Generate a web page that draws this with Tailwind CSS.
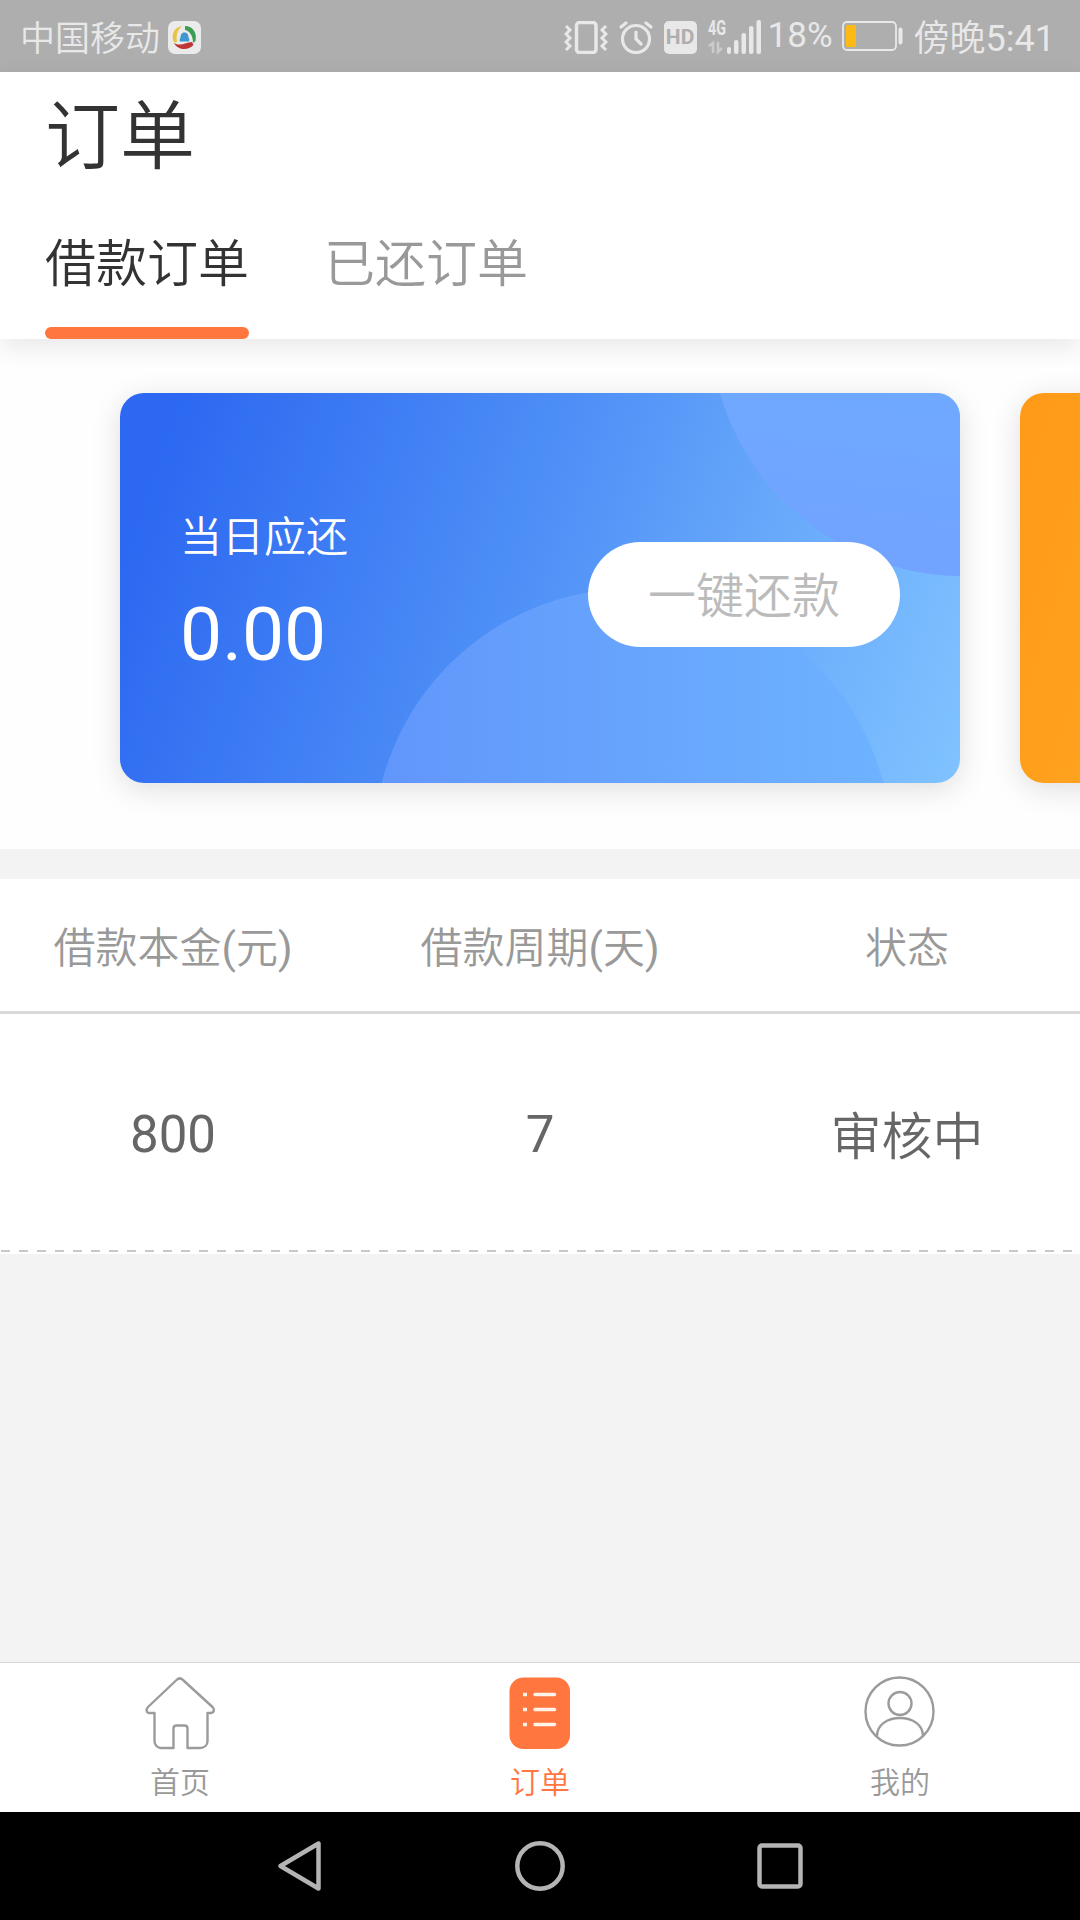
<!DOCTYPE html>
<html lang="zh-CN">
<head>
    <meta charset="UTF-8">
    <meta name="viewport" content="width=device-width, initial-scale=1.0">
    <title>订单</title>
    <script src="https://cdn.jsdelivr.net/npm/@tailwindcss/browser@4"></script>
</head>
<body class="bg-[#f3f3f3] font-[Roboto,'Noto_Sans_CJK_SC',sans-serif]">
<div class="w-[1080px] h-[1920px] flex flex-col overflow-hidden">

    <!-- status bar -->
    <div class="h-[72px] shrink-0 bg-[#aeaeae] flex items-center pt-[2px] pl-[20px] pr-[25px] text-[#e8e8e8] text-[35px] leading-none font-[350]">
        <span class="mt-[4px]">中国移动</span>
        <svg class="ml-[8px] w-[33px] h-[33px]" viewBox="0 0 33 33">
            <rect width="33" height="33" rx="7" fill="#ebebeb"/>
            <path d="M14 5C6 6 2.500 14 6 21.500L9 21C8 14 9.500 9 14 5Z" fill="#e6c545"/>
            <path d="M17 5C24 5 29.500 11 27.500 20L25 22C25 15 22 10 17 9Z" fill="#3d9d55"/>
            <path d="M6 22C10 29.500 20 30 25.500 24L24 21C18 21 13 26 6 22Z" fill="#bf3434"/>
            <path d="M16.500 11.500c-3 0-4 2.500-4 5-1 1.500-1 3-.5 4h9c.5-1 .5-2.500-.5-4 0-2.500-1-5-4-5Z" fill="#3f97d0"/>
        </svg>

        <div class="ml-auto flex items-center">
            <svg class="w-[44px] h-[33px]" viewBox="0 0 44 33" fill="none" stroke="#e8e8e8">
                <rect x="12.500" y="1.500" width="19.500" height="30" rx="3" stroke-width="3.500"/>
                <path d="M2 5l4 4-4 4 4 4-4 4 4 4-4 4M42 5l-4 4 4 4-4 4 4 4-4 4 4 4" stroke-width="3"/>
            </svg>
            <svg class="ml-[11px] w-[34px] h-[33px]" viewBox="0 0 34 33" fill="none" stroke="#e8e8e8" stroke-width="3.200" stroke-linecap="round">
                <circle cx="17" cy="18" r="13.500"/>
                <path d="M17 11v7l5 5M2 6l5-4M32 6l-5-4"/>
            </svg>
            <div class="ml-[11px] w-[33px] h-[33px] rounded-[5px] bg-[#e8e8e8] text-[#aeaeae] text-[21px] font-bold flex items-center justify-center">HD</div>
            <svg class="ml-[11px] w-[54px] h-[34px] overflow-visible" viewBox="0 0 54 34" fill="#e8e8e8">
                <text x="0" y="15" font-family="Roboto" font-size="20" font-weight="700" textLength="18" lengthAdjust="spacingAndGlyphs">4G</text>
                <path d="M1 26l4-3v10M10 22v10l4-4" fill="none" stroke="#cbcbcb" stroke-width="2.500"/>
                <rect x="19" y="27" width="4" height="7" rx="2"/>
                <rect x="26" y="20" width="4.500" height="14" rx="2"/>
                <rect x="33.500" y="13" width="4.500" height="21" rx="2"/>
                <rect x="41" y="6" width="4.500" height="28" rx="2"/>
                <rect x="48.500" y="0" width="4.500" height="34" rx="2"/>
            </svg>
            <span class="ml-[6px] -mt-[4px] text-[35px] w-[67px] font-normal">18%</span>
            <svg class="ml-[7px] w-[61px] h-[30px] -mt-[3px]" viewBox="0 0 61 30">
                <rect x="1" y="1" width="53" height="28" rx="4" fill="none" stroke="#e8e8e8" stroke-width="1.800"/>
                <rect x="4" y="4" width="10" height="22" rx="1.500" fill="#fdba14"/>
                <rect x="56.500" y="6.500" width="4" height="17" rx="2" fill="#e8e8e8"/>
            </svg>
            <span class="ml-[11px] mt-[3px] text-[36px]">傍晚<span class="font-normal">5:41</span></span>
        </div>
    </div>

    <!-- header + tabs -->
    <div class="relative h-[267px] shrink-0 bg-white px-[45px] flex flex-col text-[#333] shadow-[0_8px_24px_rgba(0,0,0,0.09)]">
        <h1 class="h-[124px] leading-[131px] text-[75px] font-[350]">订单</h1>
        <div class="flex gap-[75px] text-[51px] leading-[137px] font-[350]">
            <div class="h-[143px] flex flex-col">
                <span class="h-[131px]">借款订单</span>
                <i class="h-[12px] rounded-full bg-[#ff763f]"></i>
            </div>
            <span class="text-[#999]">已还订单</span>
        </div>
    </div>

    <!-- cards -->
    <div class="h-[510px] shrink-0 bg-[#fefefe] pt-[54px] pl-[120px] flex gap-[60px] overflow-hidden">
        <div class="relative w-[840px] h-[390px] shrink-0 rounded-[24px] shadow-[0_6px_30px_rgba(0,0,0,0.13)] bg-[linear-gradient(109deg,#2c68f1_6%,#5092f7_50%,#64a5fa_68%,#80c3ff_100%)] flex items-center justify-between pl-[60px] pr-[60px] text-white">
            <svg class="absolute inset-0 w-full h-full rounded-[24px]" viewBox="0 0 840 390">
                <defs>
                    <linearGradient id="c1" x1="0" y1="0" x2="1" y2="0">
                        <stop offset="0" stop-color="#6196fb"/>
                        <stop offset="1" stop-color="#6db3ff"/>
                    </linearGradient>
                    <linearGradient id="c2" x1="0.500" y1="1" x2="0.600" y2="0.200">
                        <stop offset="0" stop-color="#71a3ff"/>
                        <stop offset="1" stop-color="#6db0ff"/>
                    </linearGradient>
                </defs>
                <circle cx="512.500" cy="454.500" r="259" fill="url(#c1)"/>
                <circle cx="843" cy="-70" r="253" fill="url(#c2)"/>
            </svg>
            <div class="relative pt-[10px]">
                <p class="text-[42px] leading-[60px] font-[350]">当日应还</p>
                <p class="text-[75px] leading-[88px] mt-[22px]">0.00</p>
            </div>
            <button class="relative mt-[13px] pt-[5px] w-[312px] h-[105px] rounded-full bg-white text-[#bbb] text-[48px] leading-none font-[350]">一键还款</button>
        </div>
        <div class="w-[840px] h-[390px] shrink-0 rounded-[24px] shadow-[0_6px_30px_rgba(0,0,0,0.13)] bg-[linear-gradient(109deg,#ff9a17,#ffa622_30%,#ffb52f)]"></div>
    </div>

    <!-- order table -->
    <div class="mt-[30px] shrink-0 bg-white text-center">
        <div class="h-[135px] pt-[6px] border-b-3 border-[#d9d9d9] grid grid-cols-[346px_388px_346px] items-center text-[42px] text-[#999] font-[350]">
            <span>借款本金<span class="font-normal">(</span>元<span class="font-normal">)</span></span>
            <span>借款周期<span class="font-normal">(</span>天<span class="font-normal">)</span></span>
            <span>状态</span>
        </div>
        <div class="h-[236px] pt-[7px] grid grid-cols-[346px_388px_346px] items-center text-[51px] text-[#666]">
            <span>800</span>
            <span>7</span>
            <span class="pt-[5px] font-[350]">审核中</span>
        </div>
        <div class="h-[4px] bg-white">
            <div class="h-[2px] bg-[repeating-linear-gradient(90deg,transparent_0_1px,#c8c8c8_1px_10px,transparent_10px_18px)]"></div>
        </div>
    </div>

    <!-- tab bar -->
    <div class="mt-auto h-[150px] shrink-0 bg-white border-t border-[#d8d8d8] grid grid-cols-3 text-[30px] leading-[40px] text-[#999] font-[350]">
        <div class="flex flex-col items-center pt-[12px]">
            <svg class="w-[72px] h-[76px]" viewBox="0 0 72 76" fill="none" stroke="#9b9b9b" stroke-width="2.400" stroke-linejoin="round">
                <path d="M32.500 5 4 32C1.500 34.500 2.500 38 5.500 38H10.500V66c0 4 3 7 6.500 7H29.500V53.500c0-2 1-3 3-3h8c2 0 3 1 3 3V73H56c4.500 0 7.500-3 7.500-7V38H66.500c3.500 0 4.500-3.500 2-6L39 5c-2-2-4.500-2-6.500 0Z"/>
            </svg>
            <span class="mt-[12px]">首页</span>
        </div>
        <div class="flex flex-col items-center pt-[12px] text-[#ff763f]">
            <svg class="w-[72px] h-[76px]" viewBox="0 0 72 76">
                <rect x="5.500" y="2.500" width="60.500" height="71.500" rx="14" fill="#ff763f"/>
                <path d="M19 19.500h4M19 34.500h4M19 49.500h4" stroke="#fff3ea" stroke-width="3.500"/>
                <path d="M31 19.500h19.500M31 34.500h19.500M31 49.500h19.500" stroke="#fff3ea" stroke-width="3.500" stroke-linecap="round"/>
            </svg>
            <span class="mt-[12px]">订单</span>
        </div>
        <div class="flex flex-col items-center pt-[12px]">
            <svg class="w-[72px] h-[76px]" viewBox="0 0 72 76" fill="none" stroke="#9b9b9b" stroke-width="2.400">
                <circle cx="35.500" cy="36.500" r="34"/>
                <circle cx="36" cy="28.500" r="11.500"/>
                <path d="M13 61C13 50 23 43 36 43s23 7 23 18"/>
            </svg>
            <span class="mt-[12px]">我的</span>
        </div>
    </div>

    <!-- android keys -->
    <div class="h-[108px] shrink-0 bg-black flex items-center justify-center gap-[190px]">
        <svg class="w-[50px] h-[54px]" viewBox="0 0 50 54" fill="none" stroke="#b4b4b4" stroke-width="4.500" stroke-linejoin="round">
            <path d="M43.500 4.500v45L5.500 27Z"/>
        </svg>
        <svg class="w-[50px] h-[54px]" viewBox="0 0 50 54" fill="none" stroke="#b4b4b4" stroke-width="4.500">
            <circle cx="25" cy="27" r="22.700"/>
        </svg>
        <svg class="w-[50px] h-[54px]" viewBox="0 0 50 54" fill="none" stroke="#b4b4b4" stroke-width="4.500">
            <rect x="4.500" y="6.500" width="41" height="41" rx="2.500"/>
        </svg>
    </div>
</div>
</body>
</html>
